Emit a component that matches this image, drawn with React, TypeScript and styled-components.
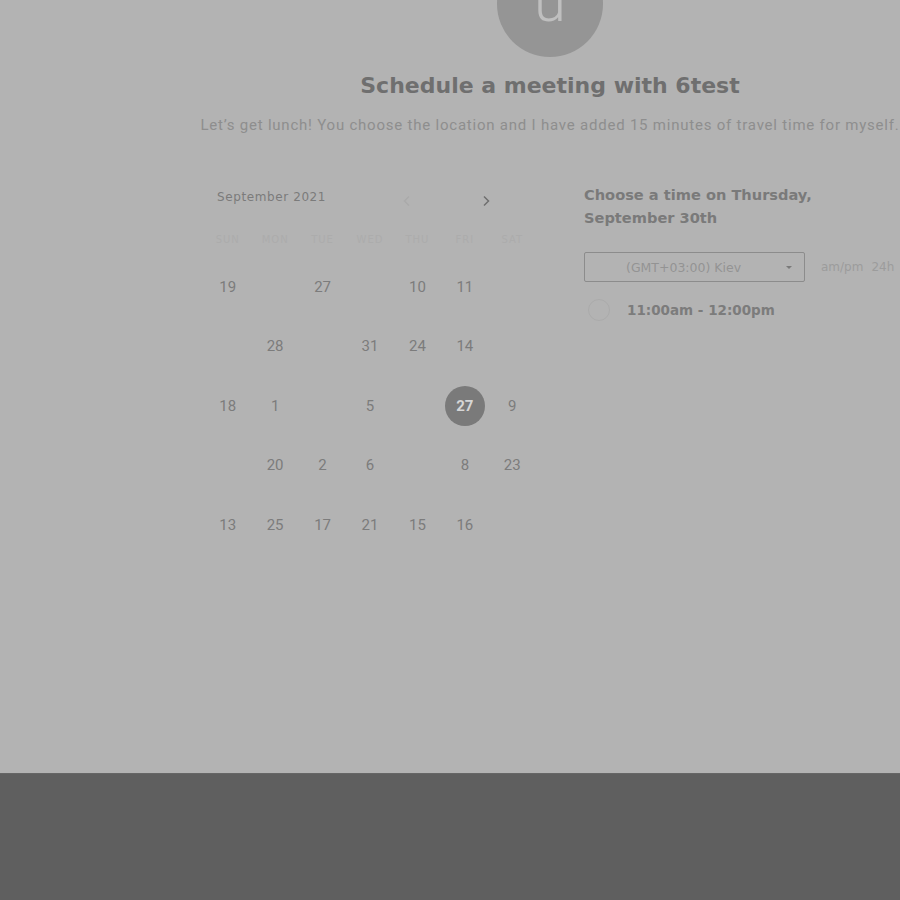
import React from "react";
import styled, { createGlobalStyle } from "styled-components";

const Global = createGlobalStyle`
  html, body { margin: 0; padding: 0; background: #b3b3b3; }
  body { font-family: "DejaVu Sans", "Liberation Sans", sans-serif; overflow: hidden; }
`;

const Page = styled.div`
  width: 900px;
  height: 900px;
  display: flex;
  flex-direction: column;
  overflow: hidden;
`;

const Main = styled.main`
  height: 773px;
  background: #b3b3b3;
  display: flex;
  flex-direction: column;
  padding-left: 200px;
  box-sizing: border-box;
`;

const Content = styled.div`
  width: 700px;
  display: flex;
  flex-direction: column;
  align-items: center;
`;

const Avatar = styled.div`
  width: 106px;
  height: 106px;
  margin-top: -49px;
  border-radius: 50%;
  background: #959595;
  display: flex;
  align-items: center;
  justify-content: center;
  color: #bfbfbf;
  font-family: Roboto, "Liberation Sans", sans-serif;
  font-weight: 300;
  font-size: 58px;
  line-height: 1;
  padding-bottom: 6px;
  box-sizing: border-box;
`;

const Title = styled.h1`
  margin: 15px 0 0;
  font-family: "DejaVu Sans", sans-serif;
  font-size: 22px;
  line-height: 28px;
  font-weight: 700;
  color: #6f6f6f;
  white-space: nowrap;
`;

const Subtitle = styled.p`
  margin: 15px 0 0;
  font-family: Roboto, "Liberation Sans", sans-serif;
  font-size: 15px;
  line-height: 20px;
  letter-spacing: 0.78px;
  color: #8e8e8e;
  white-space: nowrap;
`;

const Columns = styled.div`
  margin-top: 45px;
  align-self: stretch;
  display: flex;
  gap: 48px;
  padding-left: 4px;
`;

const Calendar = styled.section`
  width: 332px;
  display: flex;
  flex-direction: column;
`;

const CalHeader = styled.div`
  height: 34px;
  display: flex;
  align-items: center;
  padding-left: 13px;
`;

const Month = styled.span`
  flex: 1;
  font-size: 12px;
  color: #7b7b7b;
  letter-spacing: 0.6px;
`;

const NavBtn = styled.span<{ $faint?: boolean }>`
  width: 20px;
  display: flex;
  justify-content: center;
  margin-top: 7px;
  color: ${(p) => (p.$faint ? "#aaaaaa" : "#6f6f6f")};
`;

const Spacer = styled.span<{ $w: number }>`
  width: ${(p) => p.$w}px;
`;

const Weekdays = styled.div`
  margin-top: 13px;
  display: grid;
  grid-template-columns: repeat(7, 1fr);
  height: 24px;
  align-items: center;
`;

const Weekday = styled.span`
  text-align: center;
  font-size: 10px;
  letter-spacing: 1px;
  color: #acacac;
`;

const Days = styled.div`
  margin-top: 6px;
  display: grid;
  grid-template-columns: repeat(7, 1fr);
  grid-auto-rows: 59.5px;
`;

const Day = styled.span<{ $selected?: boolean }>`
  display: flex;
  align-items: center;
  justify-content: center;
  font-family: Roboto, "Liberation Sans", sans-serif;
  font-size: 15px;
  color: #7c7c7c;
  & > b {
    width: 40px;
    height: 40px;
    border-radius: 50%;
    display: flex;
    align-items: center;
    justify-content: center;
    background: ${(p) => (p.$selected ? "#7a7a7a" : "transparent")};
    color: ${(p) => (p.$selected ? "#d6d6d6" : "inherit")};
    font-weight: ${(p) => (p.$selected ? 700 : 400)};
  }
`;

const TimePanel = styled.section`
  flex: 1;
  padding-top: 3px;
  display: flex;
  flex-direction: column;
`;

const TimeTitle = styled.h2`
  margin: 0;
  font-size: 14.6px;
  line-height: 23px;
  font-weight: 700;
  color: #7a7a7a;
`;

const ZoneRow = styled.div`
  margin-top: 23px;
  display: flex;
  align-items: center;
  gap: 16px;
`;

const Select = styled.div`
  width: 221px;
  height: 30px;
  box-sizing: border-box;
  border: 1px solid #8c8c8c;
  border-radius: 2px;
  display: flex;
  align-items: center;
  padding-left: 41px;
  padding-right: 12px;
  font-size: 12.5px;
  color: #939393;
`;

const SelectText = styled.span`
  flex: 1;
`;

const Caret = styled.span`
  width: 0;
  height: 0;
  border-left: 3px solid transparent;
  border-right: 3px solid transparent;
  border-top: 3px solid #7a7a7a;
`;

const Formats = styled.span`
  display: flex;
  gap: 8px;
  font-size: 12px;
  color: #9c9c9c;
  white-space: nowrap;
`;

const Slot = styled.div`
  margin-top: 13px;
  height: 30px;
  display: flex;
  align-items: center;
  gap: 17px;
  padding-left: 4px;
`;

const Radio = styled.span`
  width: 22px;
  height: 22px;
  border-radius: 50%;
  border: 1px solid #ababab;
  box-sizing: border-box;
`;

const SlotText = styled.span`
  font-size: 13.5px;
  font-weight: 700;
  color: #7c7c7c;
`;

const Footer = styled.footer`
  flex: 1;
  background: #5f5f5f;
  border-top: 1px solid #666666;
`;

const rows: (string | null)[][] = [
  ["19", null, "27", null, "10", "11", null],
  [null, "28", null, "31", "24", "14", null],
  ["18", "1", null, "5", null, "27", "9"],
  [null, "20", "2", "6", null, "8", "23"],
  ["13", "25", "17", "21", "15", "16", null],
];

const weekdays = ["SUN", "MON", "TUE", "WED", "THU", "FRI", "SAT"];

const Chevron = ({ dir }: { dir: "l" | "r" }) => (
  <svg width="10" height="12" viewBox="0 0 10 12" fill="none">
    <path
      d={dir === "r" ? "M3 1.5 L7.5 6 L3 10.5" : "M7 1.5 L2.5 6 L7 10.5"}
      stroke="currentColor"
      strokeWidth="1.5"
    />
  </svg>
);

export default function App() {
  return (
    <Page>
      <Global />
      <Main>
        <Content>
          <Avatar>u</Avatar>
          <Title>Schedule a meeting with 6test</Title>
          <Subtitle>
            Let’s get lunch! You choose the location and I have added 15 minutes of travel time for myself.
          </Subtitle>
          <Columns>
            <Calendar>
              <CalHeader>
                <Month>September 2021</Month>
                <NavBtn $faint>
                  <Chevron dir="l" />
                </NavBtn>
                <Spacer $w={59} />
                <NavBtn>
                  <Chevron dir="r" />
                </NavBtn>
                <Spacer $w={40} />
              </CalHeader>
              <Weekdays>
                {weekdays.map((w) => (
                  <Weekday key={w}>{w}</Weekday>
                ))}
              </Weekdays>
              <Days>
                {rows.flat().map((d, i) => (
                  <Day key={i} $selected={i === 19}>
                    {d && <b>{d}</b>}
                  </Day>
                ))}
              </Days>
            </Calendar>
            <TimePanel>
              <TimeTitle>
                Choose a time on Thursday,
                <br />
                September 30th
              </TimeTitle>
              <ZoneRow>
                <Select>
                  <SelectText>(GMT+03:00) Kiev</SelectText>
                  <Caret />
                </Select>
                <Formats>
                  <span>am/pm</span>
                  <span>24h</span>
                </Formats>
              </ZoneRow>
              <Slot>
                <Radio />
                <SlotText>11:00am - 12:00pm</SlotText>
              </Slot>
            </TimePanel>
          </Columns>
        </Content>
      </Main>
      <Footer />
    </Page>
  );
}
